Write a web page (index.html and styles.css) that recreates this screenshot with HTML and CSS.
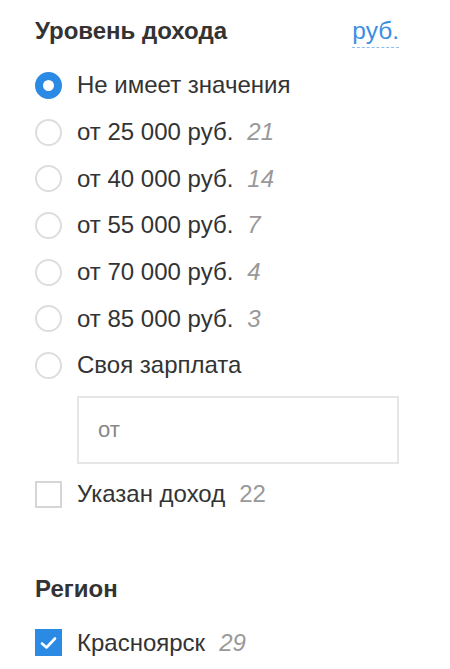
FILE: index.html
```html
<!DOCTYPE html>
<html lang="ru">
<head>
  <meta charset="UTF-8" />
  <meta name="viewport" content="width=device-width, initial-scale=1.0"/>
  <title>Фильтры</title>
  <link rel="stylesheet" href="styles.css">
</head>
<body>
  <div class="filter">
    <div class="filter-head">
      <h2 class="filter-title">Уровень дохода</h2>
      <span class="currency">руб.</span>
    </div>

    <label class="option">
      <span class="radio checked"></span>
      <span class="option-text">Не имеет значения</span>
    </label>
    <label class="option">
      <span class="radio"></span>
      <span class="option-text">от 25 000 руб.</span>
      <span class="count">21</span>
    </label>
    <label class="option">
      <span class="radio"></span>
      <span class="option-text">от 40 000 руб.</span>
      <span class="count">14</span>
    </label>
    <label class="option">
      <span class="radio"></span>
      <span class="option-text">от 55 000 руб.</span>
      <span class="count">7</span>
    </label>
    <label class="option">
      <span class="radio"></span>
      <span class="option-text">от 70 000 руб.</span>
      <span class="count">4</span>
    </label>
    <label class="option">
      <span class="radio"></span>
      <span class="option-text">от 85 000 руб.</span>
      <span class="count">3</span>
    </label>
    <label class="option">
      <span class="radio"></span>
      <span class="option-text">Своя зарплата</span>
    </label>

    <div class="salary-input">от</div>

    <label class="option">
      <span class="checkbox"></span>
      <span class="option-text">Указан доход</span>
      <span class="count upright">22</span>
    </label>
  </div>

  <div class="filter region">
    <h2 class="filter-title">Регион</h2>
    <label class="option">
      <span class="checkbox checked">
        <svg width="17" height="14" viewBox="0 0 17 14"><path d="M2 7.5 L6.5 11.5 L15 2.5" fill="none" stroke="#fff" stroke-width="2.6" stroke-linecap="round" stroke-linejoin="round"/></svg>
      </span>
      <span class="option-text">Красноярск</span>
      <span class="count">29</span>
    </label>
  </div>
</body>
</html>
```

FILE: styles.css
```css
body {
  margin: 0;
  padding: 0 51px 0 35px;
  font-family: "Liberation Sans", Arial, sans-serif;
  color: #333;
  background: #fff;
}

.filter-head {
  display: flex;
  justify-content: space-between;
  align-items: baseline;
  height: 62px;
  padding-top: 16px;
  box-sizing: border-box;
}

.filter-title {
  margin: 0;
  font-size: 24px;
  font-weight: 700;
  color: #333;
  line-height: 30px;
}

.currency {    /* dashed link */
  font-size: 24.5px;
  color: #3c8fe0;
  border-bottom: 1px dashed #8dbdec;
  line-height: 26px;
  padding-bottom: 3px;
}

.option {
  display: flex;
  align-items: center;
  height: 46.7px;
  font-size: 24px;
}

.radio {
  width: 27px;
  height: 27px;
  border: 2px solid #ddd;
  border-radius: 50%;
  box-sizing: border-box;
  flex: none;
}
.radio.checked {
  border: 8.5px solid #2b8ae3;
}

.checkbox {
  width: 27px;
  height: 27px;
  border: 2px solid #d6d6d6;
  box-sizing: border-box;
  flex: none;
  display: flex;
  align-items: center;
  justify-content: center;
}
.checkbox.checked {
  background: #2b8ae3;
  border-color: #2b8ae3;
}

.option-text {
  margin-left: 15px;
}

.count {
  margin-left: 14px;
  color: #999;
  font-style: italic;
}
.count.upright {
  font-style: normal;
}

/* свое значение зарплаты */
.salary-input {
  margin: 7px 0 7px 42px;
  height: 68px;
  border: 2px solid #e6e6e6;
  box-sizing: border-box;
  padding-left: 19px;
  display: flex;
  align-items: center;
  font-size: 22px;
  color: #888;
}

.region {
  margin-top: 58px;
}
.region .filter-title {
  line-height: 26px;
  margin-bottom: 18px;
}
```
